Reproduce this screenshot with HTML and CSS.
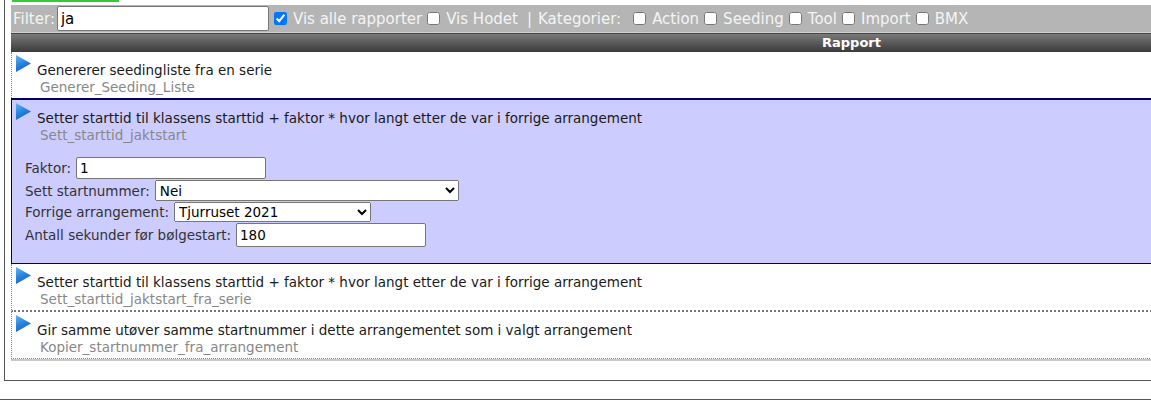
FILE: index.html
```html
<!DOCTYPE html>
<html>
  <head>
    <meta charset="UTF-8" />
    <title>Rapporter</title>
    <link rel="stylesheet" href="styles.css">
  </head>
  <body>
    <svg width="0" height="0" class="defs">
      <defs>
        <linearGradient id="arrowFill" x1="0" y1="0" x2="0.4" y2="1">
          <stop offset="0" stop-color="#62b6f4" />
          <stop offset="0.55" stop-color="#2b86e0" />
          <stop offset="1" stop-color="#1462c4" />
        </linearGradient>
      </defs>
    </svg>
    <div class="page">
      <div class="progress"></div>
      <div class="toolbar">
        <label class="filter">Filter:<input type="text" class="filter-input" value="ja" /></label>
        <label><input type="checkbox" checked />Vis alle rapporter</label>
        <label><input type="checkbox" />Vis Hodet</label>
        <span class="sep">|</span>
        <span class="cat-label">Kategorier:</span>
        <label><input type="checkbox" />Action</label>
        <label><input type="checkbox" />Seeding</label>
        <label><input type="checkbox" />Tool</label>
        <label><input type="checkbox" />Import</label>
        <label><input type="checkbox" />BMX</label>
      </div>

      <div class="reports">
        <div class="reports-head">Rapport</div>

        <div class="report">
          <svg class="arrow" width="15" height="17" viewBox="0 0 15 17"><polygon points="0,0 15,8.5 0,17" fill="url(#arrowFill)" /></svg>
          <div class="report-body">
            <div class="report-title">Genererer seedingliste fra en serie</div>
            <div class="report-name">Generer_Seeding_Liste</div>
          </div>
        </div>

        <div class="report selected">
          <svg class="arrow" width="15" height="17" viewBox="0 0 15 17"><polygon points="0,0 15,8.5 0,17" fill="url(#arrowFill)" /></svg>
          <div class="report-body">
            <div class="report-title">Setter starttid til klassens starttid + faktor * hvor langt etter de var i forrige arrangement</div>
            <div class="report-name">Sett_starttid_jaktstart</div>
            <div class="params">
              <div class="param">Faktor:<input type="text" class="w190" value="1" /></div>
              <div class="param">Sett startnummer:
                <select class="w304">
                  <option>Nei</option>
                  <option>Ja</option>
                </select>
              </div>
              <div class="param">Forrige arrangement:
                <select class="w197 short">
                  <option>Tjurruset 2021</option>
                </select>
              </div>
              <div class="param">Antall sekunder før bølgestart:<input type="text" class="w190 tall" value="180" /></div>
            </div>
          </div>
        </div>

        <div class="report dotted">
          <svg class="arrow" width="15" height="17" viewBox="0 0 15 17"><polygon points="0,0 15,8.5 0,17" fill="url(#arrowFill)" /></svg>
          <div class="report-body">
            <div class="report-title">Setter starttid til klassens starttid + faktor * hvor langt etter de var i forrige arrangement</div>
            <div class="report-name">Sett_starttid_jaktstart_fra_serie</div>
          </div>
        </div>

        <div class="report last">
          <svg class="arrow" width="15" height="17" viewBox="0 0 15 17"><polygon points="0,0 15,8.5 0,17" fill="url(#arrowFill)" /></svg>
          <div class="report-body">
            <div class="report-title">Gir samme utøver samme startnummer i dette arrangementet som i valgt arrangement</div>
            <div class="report-name">Kopier_startnummer_fra_arrangement</div>
          </div>
        </div>
      </div>
    </div>
    <div class="footer-line"></div>
  </body>
</html>
```

FILE: styles.css
```css
* {
  box-sizing: border-box;
}

html {
  overflow: hidden;
}

body {
  margin: 0;
  font-family: "DejaVu Sans", Verdana, sans-serif;
  font-size: 13.5px;
  color: #1a1a1a;
  background: #fff;
}

.defs {
  position: absolute;
}

.page {
  margin-left: 4px;
  width: 1700px;
  border-left: 1px solid #555;
  border-bottom: 1px solid #555;
  padding: 0 0 21px 6px;
}

.progress {
  width: 107px;
  height: 2px;
  margin-left: 1px;
  background: #33cc33;
}

.toolbar {
  margin-top: 3px;
  height: 28px;
  width: 1681px;
  background: #b5b5b5;
  border-bottom: 1px solid #d2d2d2;
  color: #f4f4f4;
  font-size: 15px;
  display: flex;
  align-items: center;
  padding-left: 2px;
  white-space: nowrap;
}

.toolbar label {
  display: flex;
  align-items: center;
}

.toolbar input[type="checkbox"] {
  margin: 0 6px 0 5px;
  width: 13px;
  height: 13px;
}

.filter-input {
  margin-left: 2px;
  width: 212px;
  height: 25px;
  font: inherit;
  font-size: 15px;
  padding: 1px 3px;
  border: 1px solid #767676;
  border-radius: 2px;
  color: #000;
}

.sep {
  margin-left: 9px;
  margin-right: 6px;
}

.cat-label {
  margin-right: 7px;
}

.reports {
  width: 1681px;
}

.reports-head {
  height: 19px;
  background: linear-gradient(#7a7a7a, #3a3a3a);
  border-top: 1px solid #444;
  color: #fff;
  font-weight: bold;
  text-align: center;
  font-size: 13px;
  line-height: 18px;
}

.report {
  display: flex;
  align-items: flex-start;
  border-left: 1px dotted #888;
  padding: 3px 0 2px 4px;
}

.report.selected {
  background: #ccccff;
  border-top: 2px solid #000066;
  border-bottom: 1px solid #000066;
  border-left: 1px solid #000066;
  padding-bottom: 15px;
}

.report.dotted {
  border-bottom: 2px dotted #777;
}

.report.last {
  border-bottom: 1px dotted #888;
  box-shadow: 0 2px 0 #c8c8c8;
}

.arrow {
  flex: none;
  display: block;
}

.report-body {
  margin-left: 6px;
  padding-top: 7px;
}

.report-title {
  line-height: 16px;
}

.report-name {
  color: #888;
  margin-left: 3px;
  line-height: 18px;
}

.params {
  margin-top: 13px;
  margin-left: -12px;
  color: #333;
}

.param {
  display: flex;
  align-items: center;
  gap: 5px;
  margin-bottom: 1px;
}

.param input,
.param select {
  font: inherit;
  color: #000;
  margin: 0;
}

.param input {
  height: 22px;
  border: 1px solid #767676;
  border-radius: 2px;
  padding: 1px 3px;
}

.param select {
  height: 21px;
}

.param select.short {
  height: 20px;
}

.w190 {
  width: 190px;
}

.w304 {
  width: 304px;
}

.w197 {
  width: 197px;
}

.param input.tall {
  height: 24px;
}

.footer-line {
  margin-top: 18px;
  height: 1px;
  background: #555;
}
```
